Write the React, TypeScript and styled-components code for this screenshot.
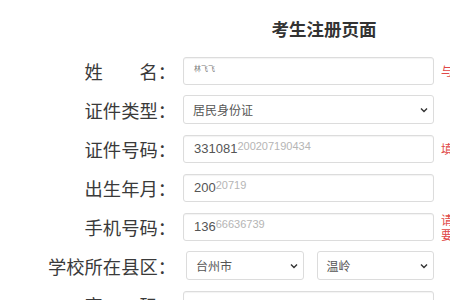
import React from "react";
import styled, { createGlobalStyle } from "styled-components";

const GlobalStyle = createGlobalStyle`
  html, body {
    margin: 0;
    padding: 0;
    background: #ffffff;
    overflow: hidden;
  }
  body {
    font-family: "Noto Sans CJK SC", "Noto Sans", sans-serif;
  }
`;

interface Field {
  label: string;
  kind: "input" | "select" | "area";
  plain?: string;
  faded?: string;
  tiny?: boolean;
  hint?: string;
}

const fields: Field[] = [
  { label: "姓　　名：", kind: "input", plain: "林飞飞", tiny: true, hint: "与身份证上的姓名一致" },
  { label: "证件类型：", kind: "select", plain: "居民身份证" },
  { label: "证件号码：", kind: "input", plain: "331081", faded: "200207190434", hint: "填写正确的证件号码" },
  { label: "出生年月：", kind: "input", plain: "200", faded: "20719" },
  { label: "手机号码：", kind: "input", plain: "136", faded: "66636739", hint: "请填写本人常用手机号码，需要接收验证码" },
  { label: "学校所在县区：", kind: "area" },
  { label: "密　　码：", kind: "input" },
];

const App: React.FC = () => {
  return (
    <Page>
      <GlobalStyle />
      <Title>考生注册页面</Title>
      <Form>
        {fields.map((f) => (
          <Row key={f.label}>
            <Label>{f.label}</Label>
            {f.kind === "input" && (
              <TextBox>
                <Value $tiny={f.tiny}>{f.plain}</Value>
                {f.faded && <Faded>{f.faded}</Faded>}
              </TextBox>
            )}
            {f.kind === "select" && (
              <SelectBox>
                <SelectText>{f.plain}</SelectText>
                <Chevron />
              </SelectBox>
            )}
            {f.kind === "area" && (
              <Pair>
                <SelectBox>
                  <SelectText>台州市</SelectText>
                  <Chevron />
                </SelectBox>
                <SelectBox>
                  <SelectText>温岭</SelectText>
                  <Chevron />
                </SelectBox>
              </Pair>
            )}
            {f.hint && <Hint>{f.hint}</Hint>}
          </Row>
        ))}
      </Form>
    </Page>
  );
};

const Chevron: React.FC = () => (
  <ChevronIcon width="8" height="6" viewBox="0 0 8 6">
    <path d="M1 1.5 L4 4.5 L7 1.5" fill="none" stroke="#333" strokeWidth="1.4" />
  </ChevronIcon>
);

export default App;

const Page = styled.div`
  width: 450px;
  height: 300px;
  overflow: hidden;
`;

const Title = styled.h1`
  margin: 0;
  padding: 17px 0 0 198px;
  height: 41px;
  box-sizing: border-box;
  text-align: center;
  font-size: 17.5px;
  font-weight: 700;
  line-height: 24px;
  color: #333;
`;

const Form = styled.div`
  display: flex;
  flex-direction: column;
  gap: 10px;
  margin-top: 15px;
`;

const Row = styled.div`
  display: grid;
  grid-template-columns: 176px 251px 160px;
  column-gap: 7px;
  align-items: center;
  height: 29px;
`;

const Label = styled.div`
  text-align: right;
  font-size: 18.3px;
  color: #3a3a3a;
  white-space: nowrap;
`;

const TextBox = styled.div`
  box-sizing: border-box;
  height: 28px;
  border: 1px solid #dcdcdc;
  border-radius: 3px;
  box-shadow: inset 0 1px 1px rgba(0, 0, 0, 0.05);
  display: flex;
  align-items: center;
  padding-left: 10px;
  font-family: "Liberation Sans", "Noto Sans CJK SC", sans-serif;
  font-size: 13px;
  color: #555;
  overflow: hidden;
  white-space: nowrap;
`;

const Value = styled.span<{ $tiny?: boolean }>`
  font-size: ${(p) => (p.$tiny ? "7px" : "13px")};
  color: ${(p) => (p.$tiny ? "#777" : "#555")};
  margin-top: ${(p) => (p.$tiny ? "-6px" : "0")};
`;

const Faded = styled.span`
  color: #b5b5b5;
  font-size: 11px;
  margin-top: -5px;
`;

const Pair = styled.div`
  display: flex;
  gap: 13px;
  padding-left: 3px;
  height: 30px;
  & > * {
    flex: 1;
    height: 30px;
  }
`;

const SelectBox = styled.div`
  position: relative;
  box-sizing: border-box;
  height: 29px;
  border: 1px solid #dcdcdc;
  border-radius: 3px;
  display: flex;
  align-items: center;
  padding-left: 9px;
  background: #fff;
`;

const SelectText = styled.span`
  font-size: 12px;
  color: #555;
`;

const ChevronIcon = styled.svg`
  position: absolute;
  right: 5px;
  top: 50%;
  margin-top: -3px;
`;

const Hint = styled.div`
  width: 160px;
  font-size: 12px;
  line-height: 15px;
  color: #e04848;
  max-height: 30px;
  overflow: hidden;
`;
